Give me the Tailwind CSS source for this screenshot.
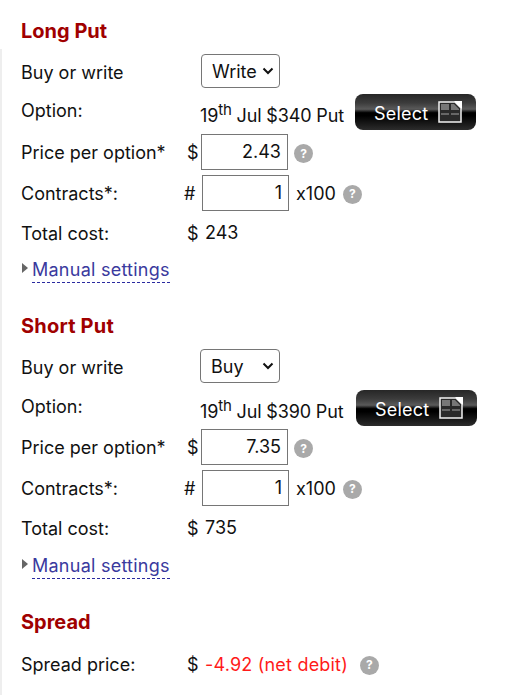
<!DOCTYPE html>
<html lang="en">
<head>
  <meta charset="UTF-8">
  <title>Put spread</title>
  <script src="https://cdn.jsdelivr.net/npm/@tailwindcss/browser@4"></script>
</head>
<body class="bg-white text-[#111] font-['Inter',sans-serif] text-[18px] leading-none overflow-hidden">
  <div class="w-[525px] h-[695px] overflow-hidden">
    <h2 class="pl-[21px] pt-[21px] h-[44px] text-[20px] leading-[20px] font-bold text-[#a00000]">Long Put</h2>
    <div class="border-l-2 border-[#eeeeee] pl-[19px] h-[651px]">

      <div class="flex items-center h-[44px] mt-[5px]">
        <span class="w-[180px] mt-[4px]">Buy or write</span>
        <div class="w-[79px] h-[34px] border border-[#767676] rounded-[4px] flex items-center justify-between pl-[10px] pr-[5px]">
          <span class="mt-[2px]">Write</span>
          <svg width="12" height="8" viewBox="0 0 12 8" fill="none" stroke="#111" stroke-width="2"><path d="M1.5 1.5 6 6l4.5-4.5"/></svg>
        </div>
      </div>
      <div class="flex items-center h-[34px]">
        <span class="w-[179px] mt-[1px]">Option:</span>
        <span class="w-[155px] whitespace-nowrap mt-[11px] tracking-[-0.15px]">19<sup class="text-[15px] leading-none -top-[7px] relative align-baseline">th</sup> Jul $340 Put</span>
        <div class="w-[121px] h-[36px] mt-[4px] rounded-[8px] bg-[linear-gradient(#262626_0%,#3c3c3c_25%,#5a5a5a_42%,#000_52%,#000_60%,#2c2c2c_100%)] text-white flex items-center pl-[19px] gap-[10px] tracking-[0.2px]">
          <span class="pt-[4px]">Select</span>
          <svg width="24" height="22" viewBox="0 0 24 22"><path d="M1 1h16l6 6v14H1z" fill="#2a2a2a" stroke="#f2f2f2" stroke-width="1.5" stroke-linejoin="miter"/><path d="M16 0h8v8z" fill="#fff"/><path d="M3 3h8v6H3zM13 3h3l5 5v1h-8z" fill="#777"/><path d="M3 12h8v2H3zM13 12h8v2h-8z" fill="#666"/></svg>
        </div>
      </div>
      <div class="flex items-center h-[43px] mt-[3px]">
        <span class="w-[166px] mt-[2px]">Price per option*</span>
        <span class="w-[14px] mt-[2px]">$</span>
        <div class="w-[87px] h-[36px] border border-[#767676] flex items-center justify-end pr-[6px]">2.43</div>
        <span class="w-[19px] h-[19px] ml-[6px] mt-[4px] rounded-full bg-[#a9a9a9] text-white text-[12px] font-bold flex items-center justify-center">?</span>
      </div>
      <div class="flex items-center h-[38px] mt-[1px]">
        <span class="w-[163px] mt-[2px]">Contracts*:</span>
        <span class="w-[18px] mt-[2px]">#</span>
        <div class="w-[87px] h-[36px] border border-[#767676] flex items-center justify-end pr-[6px]">1</div>
        <span class="ml-[7px] mt-[2px]">x100</span>
        <span class="w-[19px] h-[19px] ml-[7px] mt-[2px] rounded-full bg-[#a9a9a9] text-white text-[12px] font-bold flex items-center justify-center">?</span>
      </div>
      <div class="flex items-center h-[42px] mt-[1px]">
        <span class="w-[166px]">Total cost:</span>
        <span class="w-[18px]">$</span>
        <span class="-mt-[3px]">243</span>
      </div>
      <div class="flex items-start h-[30px] pt-[6px]">
        <svg width="11" height="13" viewBox="0 0 11 13" class="mt-[1px]"><path d="M1 1l6 5-6 5z" fill="#666"/></svg>
        <span class="text-[#3a3a9e] border-b border-dashed border-[#2a2aa0] pb-[3px] tracking-[0.25px]">Manual settings</span>
      </div>

      <h2 class="h-[23px] pt-[31px] box-content text-[20px] leading-[20px] font-bold text-[#a00000] tracking-[0.2px]">Short Put</h2>

      <div class="flex items-center h-[44px] mt-[5px]">
        <span class="w-[179px] mt-[4px]">Buy or write</span>
        <div class="w-[80px] h-[34px] border border-[#767676] rounded-[4px] flex items-center justify-between pl-[10px] pr-[5px]">
          <span class="mt-[2px]">Buy</span>
          <svg width="12" height="8" viewBox="0 0 12 8" fill="none" stroke="#111" stroke-width="2"><path d="M1.5 1.5 6 6l4.5-4.5"/></svg>
        </div>
      </div>
      <div class="flex items-center h-[34px] mt-[1px]">
        <span class="w-[179px] mt-[1px]">Option:</span>
        <span class="w-[156px] whitespace-nowrap mt-[11px] tracking-[-0.15px]">19<sup class="text-[15px] leading-none -top-[7px] relative align-baseline">th</sup> Jul $390 Put</span>
        <div class="w-[121px] h-[36px] mt-[4px] rounded-[8px] bg-[linear-gradient(#262626_0%,#3c3c3c_25%,#5a5a5a_42%,#000_52%,#000_60%,#2c2c2c_100%)] text-white flex items-center pl-[19px] gap-[10px] tracking-[0.2px]">
          <span class="pt-[4px]">Select</span>
          <svg width="24" height="22" viewBox="0 0 24 22"><path d="M1 1h16l6 6v14H1z" fill="#2a2a2a" stroke="#f2f2f2" stroke-width="1.5" stroke-linejoin="miter"/><path d="M16 0h8v8z" fill="#fff"/><path d="M3 3h8v6H3zM13 3h3l5 5v1h-8z" fill="#777"/><path d="M3 12h8v2H3zM13 12h8v2h-8z" fill="#666"/></svg>
        </div>
      </div>
      <div class="flex items-center h-[43px] mt-[2px]">
        <span class="w-[166px] mt-[2px]">Price per option*</span>
        <span class="w-[14px] mt-[2px]">$</span>
        <div class="w-[87px] h-[36px] border border-[#767676] flex items-center justify-end pr-[6px]">7.35</div>
        <span class="w-[19px] h-[19px] ml-[6px] mt-[4px] rounded-full bg-[#a9a9a9] text-white text-[12px] font-bold flex items-center justify-center">?</span>
      </div>
      <div class="flex items-center h-[38px] mt-[1px]">
        <span class="w-[163px] mt-[2px]">Contracts*:</span>
        <span class="w-[18px] mt-[2px]">#</span>
        <div class="w-[87px] h-[36px] border border-[#767676] flex items-center justify-end pr-[6px]">1</div>
        <span class="ml-[7px] mt-[2px]">x100</span>
        <span class="w-[19px] h-[19px] ml-[7px] mt-[2px] rounded-full bg-[#a9a9a9] text-white text-[12px] font-bold flex items-center justify-center">?</span>
      </div>
      <div class="flex items-center h-[42px] mt-[1px]">
        <span class="w-[166px]">Total cost:</span>
        <span class="w-[18px]">$</span>
        <span class="-mt-[3px]">735</span>
      </div>
      <div class="flex items-start h-[30px] pt-[7px]">
        <svg width="11" height="13" viewBox="0 0 11 13" class="mt-[1px]"><path d="M1 1l6 5-6 5z" fill="#666"/></svg>
        <span class="text-[#3a3a9e] border-b border-dashed border-[#2a2aa0] pb-[3px] tracking-[0.25px]">Manual settings</span>
      </div>

      <h2 class="h-[21px] pt-[32px] box-content text-[20px] leading-[20px] font-bold text-[#a00000]">Spread</h2>
      <div class="flex items-center h-[40px] mt-[12px]">
        <span class="w-[166px]">Spread price:</span>
        <span class="w-[18px]">$</span>
        <span class="text-[#ff1a1a] tracking-[0.2px]">-4.92 (net debit)</span>
        <span class="w-[19px] h-[19px] ml-[12px] rounded-full bg-[#a9a9a9] text-white text-[12px] font-bold flex items-center justify-center">?</span>
      </div>
    </div>
  </div>
</body>
</html>
